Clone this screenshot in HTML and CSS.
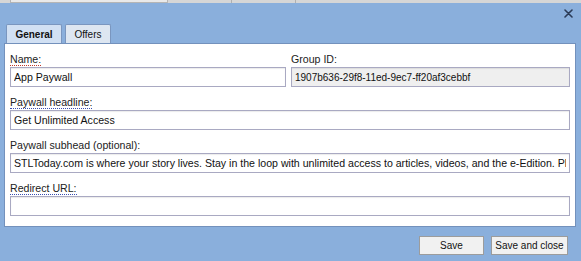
FILE: index.html
```html
<!DOCTYPE html>
<html lang="en">
<head>
  <meta charset="UTF-8" />
  <title>Edit Paywall</title>
  <link rel="stylesheet" href="styles.css">
</head>
<body>
  <!-- Page behind the window -->
  <div class="behind">
    <div class="behind-field"></div>
    <div class="behind-tool"></div>
    <div class="behind-tool"></div>
  </div>

  <!-- Window header -->
  <div class="win-header">
    <svg class="close" width="9" height="9" viewBox="0 0 9 9">
      <path d="M1 1 L8 8 M8 1 L1 8" stroke="#2b3b57" stroke-width="1.6" stroke-linecap="round" />
    </svg>
  </div>

  <!-- Tabs -->
  <div class="tabs">
    <div class="tab active">General</div>
    <div class="tab offers">Offers</div>
  </div>

  <!-- Form panel -->
  <div class="panel">
    <div class="row">
      <div class="field">
        <label><span class="req">Name:</span></label>
        <input type="text" value="App Paywall" />
      </div>
      <div class="field">
        <label>Group ID:</label>
        <input type="text" class="readonly" value="1907b636-29f8-11ed-9ec7-ff20af3cebbf" readonly />
      </div>
    </div>
    <div class="field">
      <label><span class="tip">Paywall headline:</span></label>
      <input type="text" value="Get Unlimited Access" />
    </div>
    <div class="field">
      <label>Paywall subhead (optional):</label>
      <input type="text" value="STLToday.com is where your story lives. Stay in the loop with unlimited access to articles, videos, and the e-Edition. Plus, get exclusive subscriber benefits." />
    </div>
    <div class="field">
      <label><span class="tip">Redirect URL:</span></label>
      <input type="text" value="" />
    </div>
  </div>

  <!-- Buttons -->
  <div class="footer">
    <button class="btn save">Save</button>
    <button class="btn save-close">Save and close</button>
  </div>
</body>
</html>
```

FILE: styles.css
```css
/* Base */
* {
  margin: 0;
  padding: 0;
  box-sizing: border-box;
}
body {
  background-color: #8aafdc;
  color: #222;
  font-family: "Liberation Sans", Arial, sans-serif;
  font-size: 10px;
  width: 581px;
  height: 261px;
  overflow: hidden;
}
/* Strip of the page behind */
.behind {
  height: 3px;
  background: #d6d6d6;
  display: flex;
  gap: 4px;
  padding-left: 10px;
}
.behind-field {
  width: 158px;
  background: #e9e9e9;
  border: 1px solid #b5b5b5;
  border-top: none;
}
.behind-tool {
  width: 60px;
  border-right: 1px solid #b0b0b0;
}
/* Window header */
.win-header {
  height: 21px;
  display: flex;
  justify-content: flex-end;
  padding: 6px 8px 0 0;
}
.close {
  display: block;
}
/* Tabs */
.tabs {
  display: flex;
  gap: 3px;
  padding-left: 6px;
  height: 19px;
}
.tab {
  height: 19px;
  border: 1px solid #7a96bf;
  border-bottom: none;
  border-radius: 2px 2px 0 0;
  background: #dde6f1;
  color: #111;
  font-size: 10px;
  text-align: center;
  line-height: 19px;
}
.tab.active {
  width: 56px;
  background: #d1e0f3;
  font-weight: bold;
}
.tab.offers {
  width: 46px;
}
/* Panel */
.panel {
  margin: 0 5px 0 4px;
  background: #fff;
  border: 1px solid #7391bc;
  padding: 8px 5px 2px;
}
.row {
  display: grid;
  grid-template-columns: 276px 1fr;
  gap: 5px;
}
.field {
  margin-bottom: 8px;
}
.field label {
  display: block;
  font-size: 10.6px;
  line-height: 14px;
  color: #222;
}
.req {
  border-bottom: 1px dotted #c0392b;
}
.tip {
  border-bottom: 1px dotted #3a4fb0;
}
.field input {
  display: block;
  width: 100%;
  height: 20px;
  margin-top: 1px;
  border: 1px solid #a9a9c2;
  box-shadow: inset 0 1px 1px rgba(0, 0, 0, 0.08);
  padding: 0 3px;
  font-family: "Liberation Sans", Arial, sans-serif;
  font-size: 10.6px;
  color: #111;
  background: #fff;
  outline: none;
}
.field input.readonly {
  background: #efefef;
  font-size: 10px;
}
/* Footer buttons */
.footer {
  display: flex;
  justify-content: flex-end;
  gap: 7px;
  padding: 9px 13px 0 0;
}
.btn {
  height: 19px;
  border: 1px solid #9c9c9c;
  background: #f1f1f1;
  font-family: "Liberation Sans", Arial, sans-serif;
  font-size: 10px;
  color: #111;
  cursor: pointer;
}
.btn.save {
  width: 65px;
}
.btn.save-close {
  width: 77px;
}
```
